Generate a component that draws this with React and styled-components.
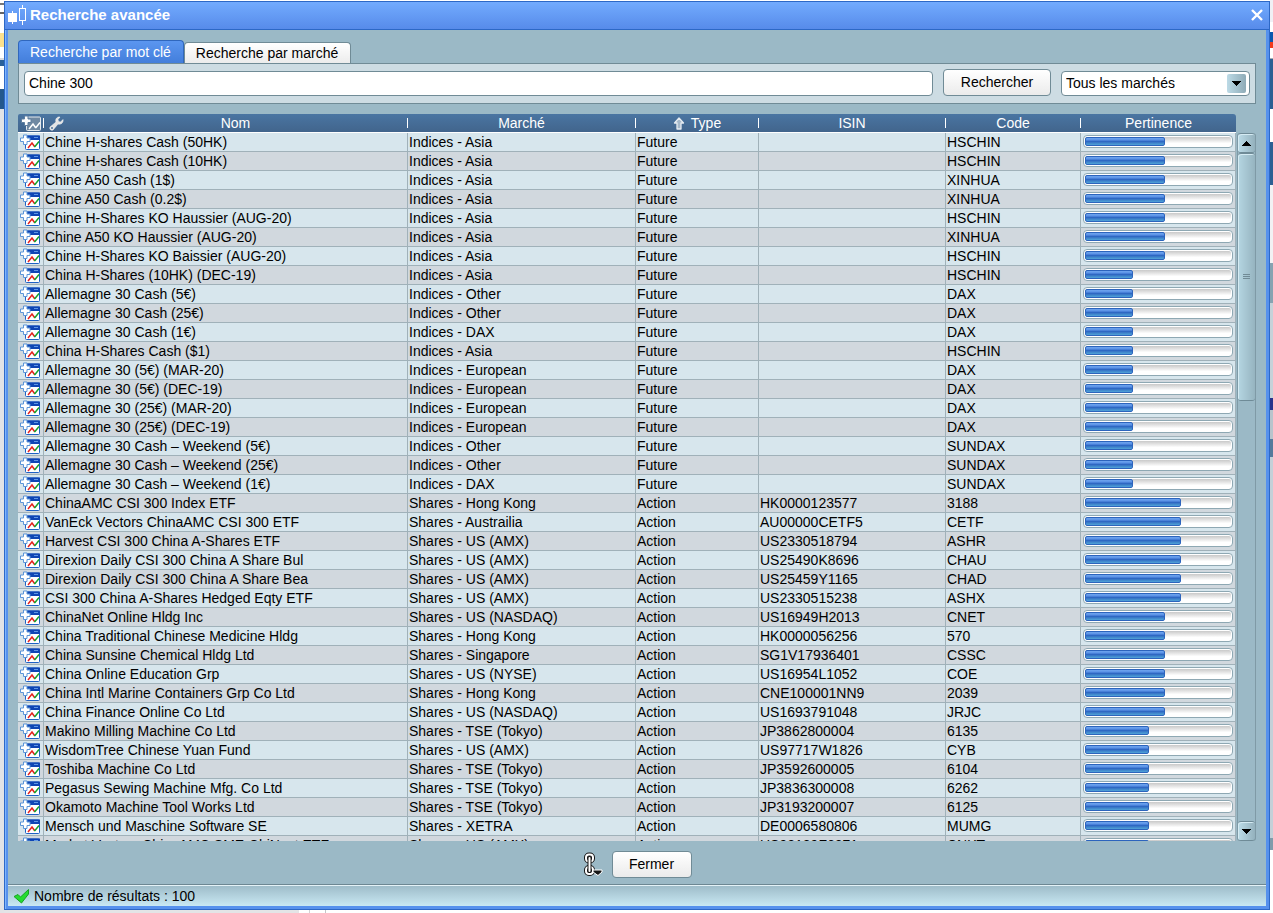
import React, { Component } from 'react';
import styled, { createGlobalStyle } from 'styled-components';

const GlobalStyle = createGlobalStyle`
  * {
    box-sizing: border-box;
  }

  body {
    margin: 0;
    font-family: "Liberation Sans", Arial, sans-serif;
    font-size: 14px;
    color: #000;
  }

  button, input, select {
    font: inherit;
    color: inherit;
    margin: 0;
  }
`

const Desktop = styled.div`
  display: grid;
  grid-template-columns: 4px 1fr 3px;
  grid-template-rows: 1px 1fr 3px;
  height: 100vh;
  min-height: 400px;
  background: #fff;
`

const LeftEdge = styled.div`
  grid-column: 1;
  grid-row: 1 / 4;
  background: linear-gradient(
    #fff 3px, #777 3px 5px, #fff 5px 12px, #666 12px 14px, #fff 14px 33px,
    #fbe08c 33px 47px, #fff 47px 58px, #d8dadc 58px 60px, #2a6099 60px 66px,
    #fff 66px 89px, #24588d 89px 109px, #e2e3e6 109px
  );
`

const RightEdge = styled.div`
  grid-column: 3;
  grid-row: 1 / 4;
  background: linear-gradient(
    #f0f0f5 22px, #fff 22px 32px, #0a58ae 32px 42px, #f23a1c 42px 48px,
    #fff 48px 58px, #a8adb2 58px 59px, #2c6093 59px 109px, #fff 109px 142px,
    #2c6093 142px 185px, #f2f2f4 185px 263px, #86a3b1 263px 303px,
    #c6d2d9 303px 398px, #28348c 398px 410px, #b8c4cc 410px 439px,
    #547a9c 439px 457px, #c4d0d8 457px 838px, #7f9cab 838px 850px, #fff 850px
  );
`

const BottomEdge = styled.div`
  grid-column: 2;
  grid-row: 3;
  background: linear-gradient(90deg, #e3e4e6 295px, #fff 295px 305px, #d0d2d4 305px 306px, #fff 306px 321px, #c4c6c8 321px 322px, #fff 322px);
`

const Dialog = styled.main`
  grid-column: 2;
  grid-row: 2;
  display: flex;
  flex-direction: column;
  min-height: 0;
  border: 1px solid #2d68c6;
  background: #5691ed;
  box-shadow: inset 1px 1px #7fb5fc;
`

const TitleBar = styled.header`
  display: flex;
  align-items: center;
  flex: none;
  height: 28px;
  padding: 0 6px 2px 3px;
  border-bottom: 1px solid #2d68c6;
  background: linear-gradient(#72abfe, #578bea);
  color: #fff;
`

const Title = styled.h1`
  flex: 1;
  margin: 0 0 0 2px;
  font-size: 15px;
  line-height: 18px;
`

const CloseButton = styled.button`
  display: flex;
  padding: 0;
  border: 0;
  background: none;
`

const Body = styled.div`
  display: flex;
  flex-direction: column;
  flex: 1;
  min-height: 0;
  margin: 0 3px 3px;
  background: #9bb9c6;
`

const Tabs = styled.div`
  display: flex;
  align-items: flex-end;
  flex: none;
  height: 33px;
  margin: 0 10px;
`

const Tab = styled.button`
  height: ${props => props.$active ? 23 : 21}px;
  padding: 0 12px 0 11px;
  border: 1px solid ${props => props.$active ? '#3067bd' : '#708b96'};
  border-bottom: 0;
  border-radius: 4px 4px 0 0;
  background: ${props => props.$active ? 'linear-gradient(#5b96f0, #437edb)' : 'linear-gradient(#fff, #ececec)'};
  color: ${props => props.$active ? '#fff' : '#000'};
  line-height: 20px;
`

const SearchPanel = styled.form`
  display: flex;
  align-items: flex-end;
  gap: 10px;
  flex: none;
  margin: 0 10px 10px;
  padding: 5px 5px 7px;
  border: 1px solid #708b96;
  background: #cddce3;
`

const SearchInput = styled.input`
  flex: 1;
  min-width: 0;
  height: 25px;
  padding: 0 4px 2px;
  border: 1px solid #708b96;
  border-radius: 4px;
  background: #fff;
`

const Button = styled.button`
  width: ${props => props.$width}px;
  height: 27px;
  padding: 0 0 2px;
  border: 1px solid #708b96;
  border-radius: 4px;
  background: linear-gradient(#fff, #ebebeb);
`

const SelectBox = styled.div`
  display: grid;
  grid-template-columns: 1fr 22px;
  align-items: center;
  width: 189px;
  height: 25px;
  border: 1px solid #708b96;
  border-radius: 4px;
  background: #fff;
`

const Select = styled.select`
  grid-column: 1 / 3;
  grid-row: 1;
  height: 23px;
  padding: 0 4px 2px;
  border: 0;
  appearance: none;
  background: none;
`

const SelectArrow = styled.span`
  grid-column: 2;
  grid-row: 1;
  display: flex;
  align-items: center;
  justify-content: center;
  width: 19px;
  height: 19px;
  border-radius: 2px;
  background: linear-gradient(90deg, #bcdae6, #8fabb7);
  pointer-events: none;
`

const Results = styled.section`
  display: flex;
  gap: 1px;
  flex: 1;
  min-height: 0;
  margin: 0 10px;
`

const TableClip = styled.div`
  flex: 1;
  min-width: 0;
  overflow: hidden;
  border-radius: 2px 3px 0 0;
`

const Table = styled.table`
  width: 100%;
  table-layout: fixed;
  border-collapse: separate;
  border-spacing: 0;
`

const Col = styled.col`
  width: ${props => props.$width ? `${props.$width}px` : 'auto'};
`

const HeadRow = styled.tr`
  height: 19px;
  background: linear-gradient(#4a75a2, #41648b);
  color: #fff;
`

const HeadCell = styled.th`
  height: 19px;
  padding: 0;
  border-bottom: 1px solid #fff;
  font-weight: normal;
  line-height: 18px;
`

const HeadContent = styled.div`
  display: flex;
  align-items: center;
  justify-content: center;
  gap: ${props => props.$sorted ? 6 : 0}px;
  height: 10px;
  border-right: ${props => props.$last ? '0' : '1px solid #fff'};
`

const HeadText = styled.span`
  flex: ${props => props.$fill ? '1' : 'none'};
`

const HeadTool = styled.span`
  display: flex;
  margin-left: ${props => props.$inset}px;
`

const Row = styled.tr`
  height: 19px;
  background: #d1d8de;

  &:nth-child(odd) {
    background: #d7e6ed;
  }
`

const Cell = styled.td`
  height: 19px;
  padding: 0 0 0 1px;
  border-right: 1px solid #a0b1b9;
  border-bottom: 1px solid #a0b1b9;
  line-height: 18px;
  white-space: nowrap;
  overflow: hidden;
`

const IconCell = styled(Cell)`
  padding-left: 2px;

  svg {
    display: block;
  }
`

const Track = styled.div`
  width: 150px;
  height: 13px;
  margin: 0 0 1px 1px;
  padding: 1px;
  border: 1px solid #8ea8b3;
  border-radius: 4px;
  background: linear-gradient(#c9c9c9, #fff 70%) content-box, #fff;
`

const Fill = styled.div`
  height: 9px;
  border: 1px solid #2c64bd;
  border-radius: 2px;
  background: linear-gradient(#6fa5ee, #5a92e6 28%, #2c65c2 48%, #3674c6 60%, #50a4d8);
`

const ScrollBar = styled.div`
  display: flex;
  flex-direction: column;
  width: 19px;
  margin-top: 19px;
  border-left: 1px solid #7f9aa6;
  border-right: 1px solid #7f9aa6;
  border-radius: 3px;
`

const ScrollButton = styled.button`
  display: flex;
  align-items: center;
  justify-content: center;
  flex: none;
  height: 20px;
  padding: 0;
  border: 1px solid #6f8b97;
  border-width: 1px 0;
  border-radius: 3px;
  background: linear-gradient(90deg, #bcdce8, #94b1bd);
  box-shadow: inset 1px 1px #d5ebf3;
`

const ScrollThumb = styled.div`
  display: flex;
  align-items: center;
  justify-content: center;
  height: 248px;
  border: 1px solid #6f8b97;
  border-width: 1px 0;
  border-radius: 3px;
  background: linear-gradient(90deg, #b5d6e2, #96b4c0);
  box-shadow: inset 1px 1px #d5ebf3;
`

const ScrollSpace = styled.div`
  flex: 1;
`

const Actions = styled.div`
  display: flex;
  align-items: center;
  justify-content: center;
  gap: 9px;
  flex: none;
  padding: 10px 0 6px;
`

const LinkButton = styled.button`
  display: flex;
  padding: 0;
  border: 0;
  background: none;
`

const StatusBar = styled.footer`
  display: flex;
  align-items: center;
  gap: 4px;
  flex: none;
  height: 22px;
  padding: 0 5px;
  border-top: 1px solid #6d8792;
  background: linear-gradient(#9cbac7, #c9e8f3);
  box-shadow: inset 0 1px #e4f2f7;
`

const CandlesIcon = () => (
  <svg width="20" height="22" viewBox="0 0 20 22" fill="none" stroke="#fff" shapeRendering="crispEdges">
    <path d="M4.500 7v13" />
    <path d="M0 9h9v9H0z" fill="#fff" stroke="none" />
    <path d="M14.500 1v3M14.500 17v4" />
    <path d="M11.500 4.500h6v12h-6z" />
  </svg>
)

const CloseIcon = () => (
  <svg width="12" height="12" viewBox="0 0 12 12" stroke="#fff" strokeWidth="2.4">
    <path d="M1 1l10 10M11 1L1 11" />
  </svg>
)

const ArrowIcon = ({ up }) => (
  <svg width="9" height="5" viewBox="0 0 9 5" shapeRendering="crispEdges">
    <path d={up ? 'M0 5h9L5 0H4z' : 'M0 0h9L5 5H4z'} />
  </svg>
)

const AddChartIcon = ({ head }) => (
  <svg width="21" height="17" viewBox="0 0 21 17" fill="none">
    <rect x="5.500" y="2" width="14" height="13.500" rx="1" fill={head ? '#7089a2' : '#fff'} stroke={head ? '#e4e9ed' : '#1f62c4'} />
    {!head && <path d="M5 1.500h15V6H5z" fill="#0f45b4" />}
    {!head && <path d="M14 3.500h4" stroke="#5f97e4" />}
    <path d="M8 14l4-5 2.500 3.500" stroke={head ? '#fff' : '#e5221d'} strokeWidth="1.500" />
    <path d="M14 12.500h1l4-5" stroke={head ? '#fff' : '#16a32a'} strokeWidth="1.500" />
    <path d="M3.500 1h3.500v3h3v3.500H7v3H3.500v-3h-3V4h3z" fill="#fff" stroke={head ? '#5f7f9f' : '#5b95d8'} />
  </svg>
)

const WrenchIcon = () => (
  <svg width="15" height="15" viewBox="0 0 15 15">
    <path d="M1 11l6-5c-1-3 1-5.500 4-5L9 3.500l.5 2 2 .5L14 3.500c.7 3-2 5.500-5 4.500l-5 6c-2 1-4-1-3-3z" fill="#e4e4e4" stroke="#fff" strokeWidth=".5" />
    <circle cx="3" cy="12" r="1" fill="#52759b" />
  </svg>
)

const SortIcon = () => (
  <svg width="12" height="13" viewBox="0 0 12 13">
    <path d="M6 1l4.500 5H8v6H4V6H1.500z" fill="#a5b8ca" stroke="#e6ecf2" strokeWidth="1.300" strokeLinejoin="round" />
  </svg>
)

const LinkIcon = () => (
  <svg width="20" height="25" viewBox="0 0 20 25" fill="none">
    <g stroke="#161616" strokeWidth="4">
      <rect x="3" y="2.500" width="7" height="7" rx="3" />
      <rect x="3" y="15" width="7" height="7" rx="3" />
    </g>
    <g stroke="#fff" strokeWidth="2">
      <rect x="3" y="2.500" width="7" height="7" rx="3" />
      <rect x="3" y="15" width="7" height="7" rx="3" />
    </g>
    <path d="M6.500 6v13" stroke="#161616" strokeWidth="4" strokeLinecap="round" />
    <path d="M6.500 6v13" stroke="#fff" strokeWidth="2" strokeLinecap="round" />
    <path d="M10 18h9v2l-4 3.500-5-3.500z" fill="#161616" stroke="#fff" />
  </svg>
)

const CheckIcon = () => (
  <svg width="17" height="16" viewBox="0 0 17 16">
    <path d="M1 8.500l4-2 2.500 2.500 8-7.500v4.500L8.500 15z" fill="#25dc31" stroke="#16a323" />
  </svg>
)

const COLUMNS = [
  { label: 'Ajouter', width: 26 },
  { label: 'Nom' },
  { label: 'Marché', width: 228 },
  { label: 'Type', width: 123 },
  { label: 'ISIN', width: 187 },
  { label: 'Code', width: 135 },
  { label: 'Pertinence', width: 155 },
]

// name, market, type, isin, code, relevance (%)
const ROWS = [
  ['Chine H-shares Cash (50HK)', 'Indices - Asia', 'Future', '', 'HSCHIN', 55],
  ['Chine H-shares Cash (10HK)', 'Indices - Asia', 'Future', '', 'HSCHIN', 55],
  ['Chine A50 Cash (1$)', 'Indices - Asia', 'Future', '', 'XINHUA', 55],
  ['Chine A50 Cash (0.2$)', 'Indices - Asia', 'Future', '', 'XINHUA', 55],
  ['Chine H-Shares KO Haussier (AUG-20)', 'Indices - Asia', 'Future', '', 'HSCHIN', 55],
  ['Chine A50 KO Haussier (AUG-20)', 'Indices - Asia', 'Future', '', 'XINHUA', 55],
  ['Chine H-Shares KO Baissier (AUG-20)', 'Indices - Asia', 'Future', '', 'HSCHIN', 55],
  ['China H-Shares (10HK) (DEC-19)', 'Indices - Asia', 'Future', '', 'HSCHIN', 33],
  ['Allemagne 30 Cash (5€)', 'Indices - Other', 'Future', '', 'DAX', 33],
  ['Allemagne 30 Cash (25€)', 'Indices - Other', 'Future', '', 'DAX', 33],
  ['Allemagne 30 Cash (1€)', 'Indices - DAX', 'Future', '', 'DAX', 33],
  ['China H-Shares Cash ($1)', 'Indices - Asia', 'Future', '', 'HSCHIN', 33],
  ['Allemagne 30 (5€) (MAR-20)', 'Indices - European', 'Future', '', 'DAX', 33],
  ['Allemagne 30 (5€) (DEC-19)', 'Indices - European', 'Future', '', 'DAX', 33],
  ['Allemagne 30 (25€) (MAR-20)', 'Indices - European', 'Future', '', 'DAX', 33],
  ['Allemagne 30 (25€) (DEC-19)', 'Indices - European', 'Future', '', 'DAX', 33],
  ['Allemagne 30 Cash – Weekend (5€)', 'Indices - Other', 'Future', '', 'SUNDAX', 33],
  ['Allemagne 30 Cash – Weekend (25€)', 'Indices - Other', 'Future', '', 'SUNDAX', 33],
  ['Allemagne 30 Cash – Weekend (1€)', 'Indices - DAX', 'Future', '', 'SUNDAX', 33],
  ['ChinaAMC CSI 300 Index ETF', 'Shares - Hong Kong', 'Action', 'HK0000123577', '3188', 66],
  ['VanEck Vectors ChinaAMC CSI 300 ETF', 'Shares - Austrailia', 'Action', 'AU00000CETF5', 'CETF', 66],
  ['Harvest CSI 300 China A-Shares ETF', 'Shares - US (AMX)', 'Action', 'US2330518794', 'ASHR', 66],
  ['Direxion Daily CSI 300 China A Share Bul', 'Shares - US (AMX)', 'Action', 'US25490K8696', 'CHAU', 66],
  ['Direxion Daily CSI 300 China A Share Bea', 'Shares - US (AMX)', 'Action', 'US25459Y1165', 'CHAD', 66],
  ['CSI 300 China A-Shares Hedged Eqty ETF', 'Shares - US (AMX)', 'Action', 'US2330515238', 'ASHX', 66],
  ['ChinaNet Online Hldg Inc', 'Shares - US (NASDAQ)', 'Action', 'US16949H2013', 'CNET', 55],
  ['China Traditional Chinese Medicine Hldg', 'Shares - Hong Kong', 'Action', 'HK0000056256', '570', 55],
  ['China Sunsine Chemical Hldg Ltd', 'Shares - Singapore', 'Action', 'SG1V17936401', 'CSSC', 55],
  ['China Online Education Grp', 'Shares - US (NYSE)', 'Action', 'US16954L1052', 'COE', 55],
  ['China Intl Marine Containers Grp Co Ltd', 'Shares - Hong Kong', 'Action', 'CNE100001NN9', '2039', 55],
  ['China Finance Online Co Ltd', 'Shares - US (NASDAQ)', 'Action', 'US1693791048', 'JRJC', 55],
  ['Makino Milling Machine Co Ltd', 'Shares - TSE (Tokyo)', 'Action', 'JP3862800004', '6135', 44],
  ['WisdomTree Chinese Yuan Fund', 'Shares - US (AMX)', 'Action', 'US97717W1826', 'CYB', 44],
  ['Toshiba Machine Co Ltd', 'Shares - TSE (Tokyo)', 'Action', 'JP3592600005', '6104', 44],
  ['Pegasus Sewing Machine Mfg. Co Ltd', 'Shares - TSE (Tokyo)', 'Action', 'JP3836300008', '6262', 44],
  ['Okamoto Machine Tool Works Ltd', 'Shares - TSE (Tokyo)', 'Action', 'JP3193200007', '6125', 44],
  ['Mensch und Maschine Software SE', 'Shares - XETRA', 'Action', 'DE0006580806', 'MUMG', 44],
  ['Market Vectors ChinaAMC SME-ChiNext ETF', 'Shares - US (AMX)', 'Action', 'US92189F6271', 'CNXT', 44],
]

const HeadLabel = ({ label }) => {
  if (label === 'Ajouter') {
    return <HeadContent><HeadTool $inset={2}><AddChartIcon head /></HeadTool></HeadContent>
  }
  if (label === 'Nom') {
    return (
      <HeadContent>
        <HeadTool $inset={5}><WrenchIcon /></HeadTool>
        <HeadText $fill>{label}</HeadText>
      </HeadContent>
    )
  }
  if (label === 'Type') {
    return <HeadContent $sorted><SortIcon /><HeadText>{label}</HeadText></HeadContent>
  }
  return <HeadContent $last={label === 'Pertinence'}><HeadText>{label}</HeadText></HeadContent>
}

class ResultRow extends Component {
  render() {
    const [name, market, type, isin, code, relevance] = this.props.data;
    return (
      <Row>
        <IconCell><AddChartIcon /></IconCell>
        <Cell>{name}</Cell>
        <Cell>{market}</Cell>
        <Cell>{type}</Cell>
        <Cell>{isin}</Cell>
        <Cell>{code}</Cell>
        <Cell>
          <Track role="progressbar" aria-label="Pertinence" aria-valuenow={relevance}>
            <Fill style={{ width: `${relevance}%` }} />
          </Track>
        </Cell>
      </Row>
    );
  }
}

class App extends Component {
  render() {
    return (
      <Desktop>
        <GlobalStyle />
        <LeftEdge />
        <RightEdge />
        <BottomEdge />
        <Dialog>
          <TitleBar>
            <CandlesIcon />
            <Title>Recherche avancée</Title>
            <CloseButton aria-label="Fermer la fenêtre"><CloseIcon /></CloseButton>
          </TitleBar>
          <Body>
            <Tabs role="tablist">
              <Tab role="tab" aria-selected="true" $active>Recherche par mot clé</Tab>
              <Tab role="tab" aria-selected="false">Recherche par marché</Tab>
            </Tabs>
            <SearchPanel onSubmit={e => e.preventDefault()}>
              <SearchInput aria-label="Mot clé" defaultValue="Chine 300" />
              <Button $width={108}>Rechercher</Button>
              <SelectBox>
                <Select aria-label="Marché">
                  <option>Tous les marchés</option>
                </Select>
                <SelectArrow><ArrowIcon /></SelectArrow>
              </SelectBox>
            </SearchPanel>
            <Results>
              <TableClip>
                <Table>
                  <colgroup>
                    {COLUMNS.map(col => <Col key={col.label} $width={col.width} />)}
                  </colgroup>
                  <thead>
                    <HeadRow>
                      {COLUMNS.map(col => (
                        <HeadCell key={col.label} aria-label={col.label}>
                          <HeadLabel label={col.label} />
                        </HeadCell>
                      ))}
                    </HeadRow>
                  </thead>
                  <tbody>
                    {ROWS.map(row => <ResultRow key={row[0]} data={row} />)}
                  </tbody>
                </Table>
              </TableClip>
              <ScrollBar>
                <ScrollButton aria-label="Monter"><ArrowIcon up /></ScrollButton>
                <ScrollThumb>
                  <svg width="7" height="6" viewBox="0 0 7 6" stroke="#708b96" shapeRendering="crispEdges">
                    <path d="M0 .5h7M0 2.500h7M0 4.500h7" />
                  </svg>
                </ScrollThumb>
                <ScrollSpace />
                <ScrollButton aria-label="Descendre"><ArrowIcon /></ScrollButton>
              </ScrollBar>
            </Results>
            <Actions>
              <LinkButton aria-label="Lier"><LinkIcon /></LinkButton>
              <Button $width={80}>Fermer</Button>
            </Actions>
            <StatusBar>
              <CheckIcon />
              <span>Nombre de résultats : 100</span>
            </StatusBar>
          </Body>
        </Dialog>
      </Desktop>
    );
  }
}

export default App;
